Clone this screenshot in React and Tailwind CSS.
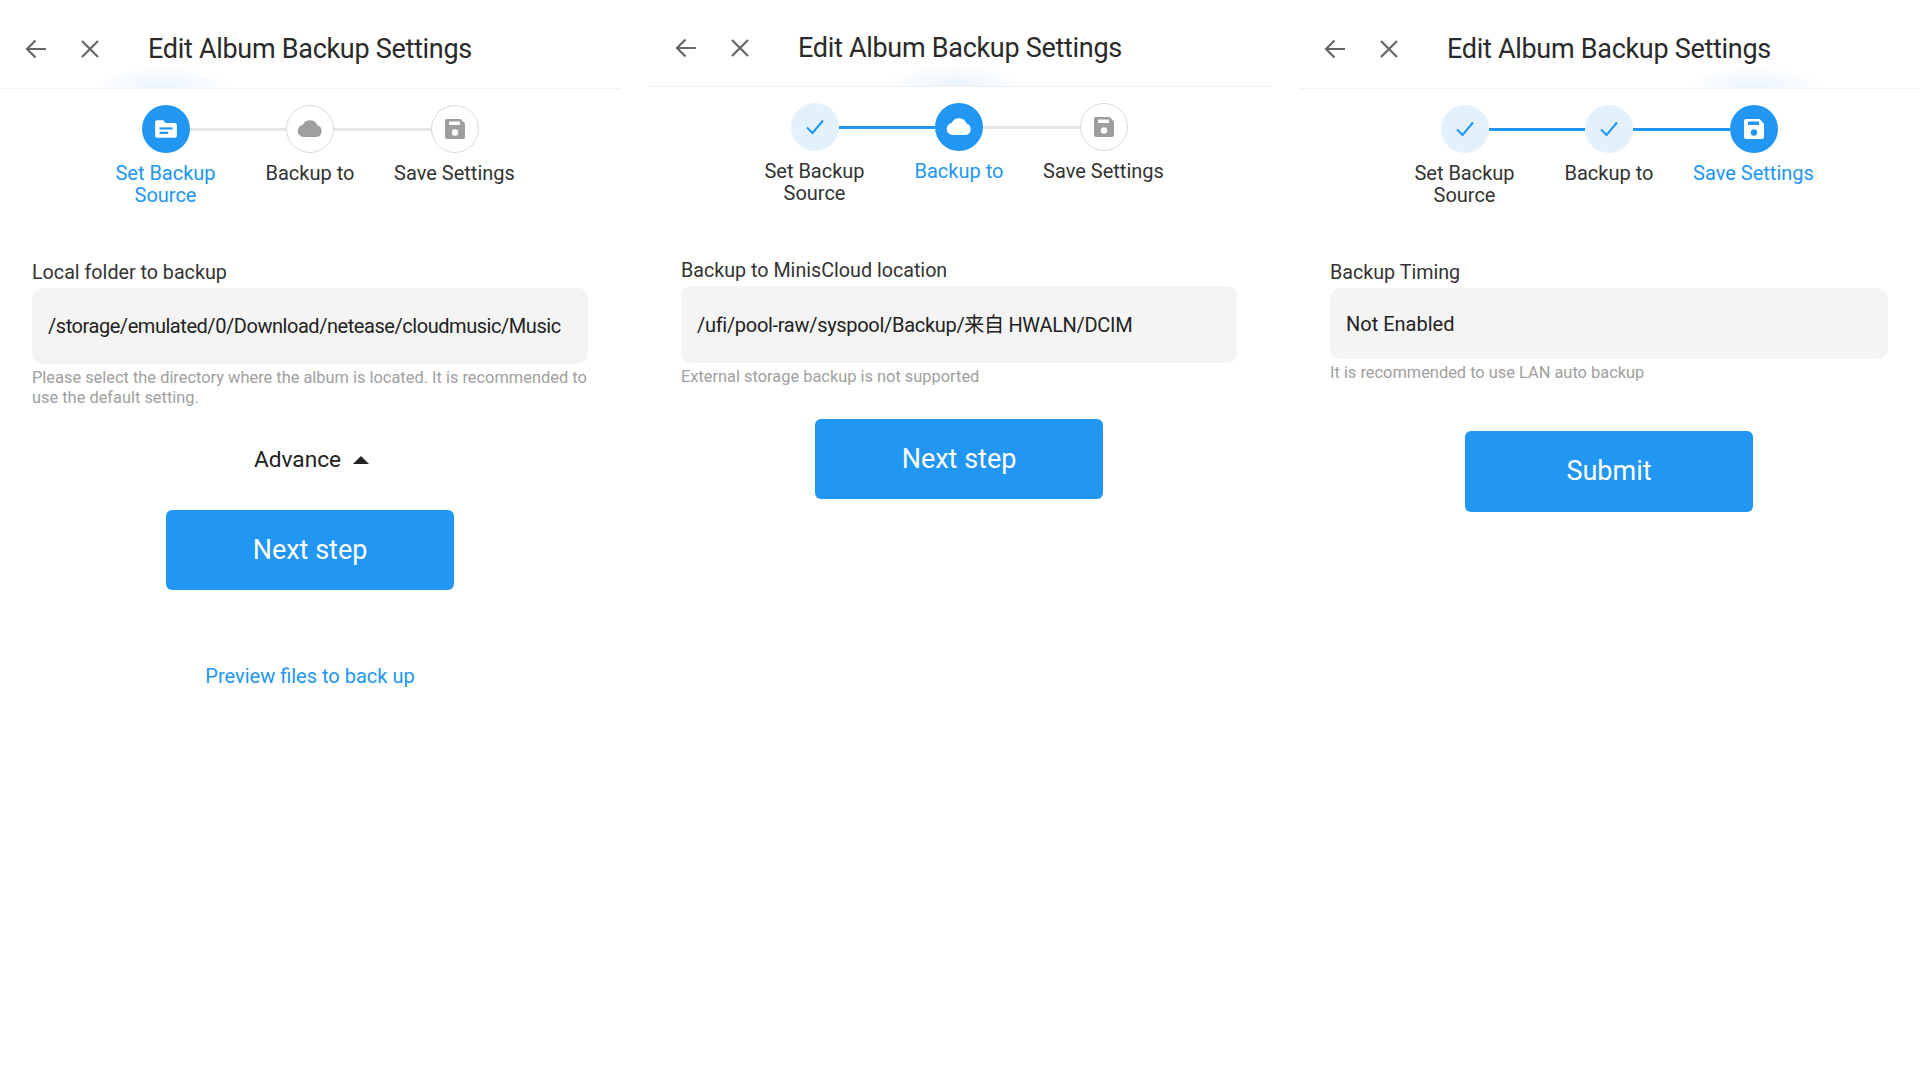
import React from "react";

const BLUE = "#2196f3";

const FolderIcon = ({ color, lines }) => (
  <svg width="26" height="26" viewBox="0 0 24 24">
    <path d="M2 5.500A1.500 1.500 0 0 1 3.500 4h6l2.200 2.500h8.800A1.500 1.500 0 0 1 22 8v10.500a1.500 1.500 0 0 1-1.500 1.500h-17A1.500 1.500 0 0 1 2 18.500z" fill={color} />
    <rect x="6" y="10.500" width="12" height="2" fill={lines} />
    <rect x="6" y="14.500" width="8" height="2" fill={lines} />
  </svg>
);

const CloudIcon = ({ color }) => (
  <svg width="28" height="28" viewBox="0 0 28 28">
    <path d="M7.500 22A6 6 0 0 1 6.600 10.100 8 8 0 0 1 21.300 10.300 6 6 0 0 1 20.500 22z" fill={color} />
  </svg>
);

const SaveIcon = ({ color, cut }) => (
  <svg width="24" height="24" viewBox="0 0 24 24">
    <path d="M4 2h13.500L22 6.500V20a2 2 0 0 1-2 2H4a2 2 0 0 1-2-2V4a2 2 0 0 1 2-2z" fill={color} />
    <rect x="6" y="4.500" width="11" height="3.500" fill={cut} />
    <circle cx="12" cy="15.500" r="3.200" fill={cut} />
  </svg>
);

const CheckIcon = () => (
  <svg width="22" height="22" viewBox="0 0 22 22" fill="none" stroke={BLUE} strokeWidth="2">
    <path d="M3 11.500l5.500 5.500L19 4.500" />
  </svg>
);

const Header = ({ className }) => (
  <div className={`flex items-center border-b border-[#f1f1f1] pl-[25px] pt-[10px] ${className}`}>
    <svg width="22" height="22" viewBox="0 0 22 22" fill="none" stroke="#666" strokeWidth="2.200">
      <path d="M21 11H2M10.500 2.500L2 11l8.500 8.500" />
    </svg>
    <svg className="ml-[33px]" width="20" height="20" viewBox="0 0 20 20" fill="none" stroke="#666" strokeWidth="2.200">
      <path d="M2 2l16 16M18 2L2 18" />
    </svg>
    <span className="ml-[48px] text-[27px] tracking-[-0.3px] text-[#2a2a2a]">Edit Album Backup Settings</span>
  </div>
);

const Circle = ({ state, icon }) => {
  const look =
    state === "active"
      ? "bg-[#2196f3]"
      : state === "done"
        ? "bg-[#e3f1fd]"
        : "border border-[#d9d9d9] bg-white";
  return <div className={`flex h-12 w-12 shrink-0 items-center justify-center rounded-full ${look}`}>{icon}</div>;
};

const Stepper = ({ steps }) => (
  <div className="flex flex-col items-center">
    <div className="flex items-center">
      {steps.map((s, i) => (
        <React.Fragment key={s.name}>
          {i > 0 && (
            <div className={`h-[3px] w-[96.5px] ${steps[i].state === "todo" ? "bg-[#e6e6e6]" : "bg-[#2196f3]"}`}></div>
          )}
          <Circle state={s.state} icon={s.icon} />
        </React.Fragment>
      ))}
    </div>
    <div className="mt-[9px] flex">
      {steps.map((s) => (
        <div
          key={s.name}
          className={`w-[144.5px] text-center text-[20px] leading-[22px] ${s.state === "active" ? "text-[#2196f3]" : "text-[#333]"}`}
        >
          {s.name}
        </div>
      ))}
    </div>
  </div>
);

const Field = ({ title, value, hint, height, valueClass }) => (
  <div className="mt-[55px]">
    <div className="text-[19.7px] leading-[24px] text-[#333]">{title}</div>
    <div className={`mt-[3px] flex items-center rounded-[10px] bg-[#f4f4f4] pl-4 text-[20px] text-[#222] ${height} ${valueClass}`}>
      {value}
    </div>
    <p className="mt-1 text-[16.4px] leading-[20px] text-[#a0a0a0]">{hint}</p>
  </div>
);

const PrimaryButton = ({ children, className }) => (
  <button className={`mx-auto flex w-[288px] items-center justify-center rounded-md bg-[#2196f3] text-[27px] text-white ${className}`}>
    {children}
  </button>
);

export default function App() {
  const first = [
    { name: "Set Backup Source", state: "active", icon: <FolderIcon color="#fff" lines={BLUE} /> },
    { name: "Backup to", state: "todo", icon: <CloudIcon color="#9e9e9e" /> },
    { name: "Save Settings", state: "todo", icon: <SaveIcon color="#9e9e9e" cut="#fff" /> },
  ];
  const second = [
    { name: "Set Backup Source", state: "done", icon: <CheckIcon /> },
    { name: "Backup to", state: "active", icon: <CloudIcon color="#fff" /> },
    { name: "Save Settings", state: "todo", icon: <SaveIcon color="#9e9e9e" cut="#fff" /> },
  ];
  const third = [
    { name: "Set Backup Source", state: "done", icon: <CheckIcon /> },
    { name: "Backup to", state: "done", icon: <CheckIcon /> },
    { name: "Save Settings", state: "active", icon: <SaveIcon color="#fff" cut={BLUE} /> },
  ];

  return (
    <div className="flex h-[1079px] w-[1920px] overflow-hidden bg-white font-['Roboto','Noto_Sans_CJK_SC',sans-serif]">
      {/* Set Backup Source */}
      <div className="w-[620px] shrink-0">
        <Header className="h-[89px] bg-[radial-gradient(ellipse_70px_22px_at_162px_100%,#e9f3fd,transparent)]" />
        <div className="px-8 pt-4">
          <Stepper steps={first} />
          <Field
            title="Local folder to backup"
            value="/storage/emulated/0/Download/netease/cloudmusic/Music"
            valueClass="tracking-[-0.45px]"
            hint="Please select the directory where the album is located. It is recommended to use the default setting."
            height="h-[76px]"
          />
          <div className="mt-[37px] flex items-center justify-center gap-3 pl-[3px] text-[22.7px] leading-[30px] text-[#222]">
            Advance
            <span className="h-0 w-0 border-x-[8px] border-b-[8px] border-x-transparent border-b-[#222]"></span>
          </div>
          <PrimaryButton className="mt-[35px] h-20">Next step</PrimaryButton>
          <div className="mt-[72px] text-center text-[20px] leading-[28px] text-[#2196f3]">Preview files to back up</div>
        </div>
      </div>

      {/* Backup to */}
      <div className="ml-[30px] w-[620px] shrink-0">
        <Header className="h-[87px] bg-[radial-gradient(ellipse_70px_22px_at_305px_100%,#e9f3fd,transparent)]" />
        <div className="pl-[31px] pr-[33px] pt-4">
          <Stepper steps={second} />
          <Field
            title="Backup to MinisCloud location"
            value="/ufi/pool-raw/syspool/Backup/来自 HWALN/DCIM"
            valueClass="tracking-[-0.3px]"
            hint="External storage backup is not supported"
            height="h-[77px]"
          />
          <PrimaryButton className="mt-8 h-20">Next step</PrimaryButton>
        </div>
      </div>

      {/* Save Settings */}
      <div className="ml-[29px] w-[621px] shrink-0">
        <Header className="h-[89px] bg-[radial-gradient(ellipse_70px_22px_at_455px_100%,#e9f3fd,transparent)]" />
        <div className="pl-[31px] pr-8 pt-4">
          <Stepper steps={third} />
          <Field
            title="Backup Timing"
            value="Not Enabled"
            hint="It is recommended to use LAN auto backup"
            height="h-[71px]"
          />
          <PrimaryButton className="mt-12 h-[81px]">Submit</PrimaryButton>
        </div>
      </div>
    </div>
  );
}
